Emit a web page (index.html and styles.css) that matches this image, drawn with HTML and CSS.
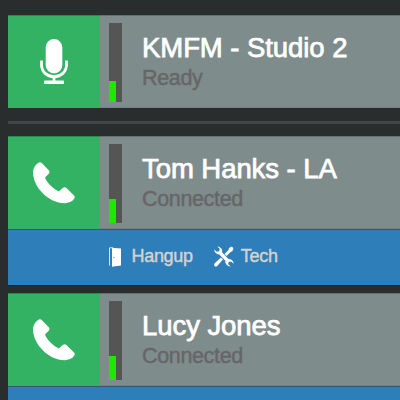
FILE: index.html
```html
<!DOCTYPE html>
<html lang="en">
<head>
<meta charset="utf-8">
<title>Connections</title>
<link rel="stylesheet" href="styles.css">
</head>
<body>
<svg class="defs" width="0" height="0">
  <symbol id="phone" viewBox="0 0 42 42">
    <path d="M0 10.500C0 6.500 2.500 2 6 .400C7.200 0 8 .200 9 1.200L15.800 8.200C16.700 9.200 16.600 10.600 15.800 11.700L12 15.500C13.800 20.800 20.300 27 25.800 29.400L30 25.700C31.300 24.900 32.500 25 33.400 25.900L41 33.500C42 34.700 41.900 35.500 41.300 36.600C39 40.200 35.300 41.300 31.500 41.200C15.500 40.900 .300 25.500 0 10.500Z"/>
  </symbol>
</svg>
<main class="list">
  <section class="card">
    <div class="row">
      <div class="status">
        <svg class="mic" width="28" height="45" viewBox="0 0 28 45"><rect x="5.700" y="0" width="16.600" height="34.500" rx="8.300"/><path class="line" d="M1.500 21.500V25.500C1.500 33 7 37.600 14 37.600S26.500 33 26.500 25.500V21.500M14 38V43"/><rect x="4" y="41.600" width="20" height="3.400" rx=".8"/></svg>
      </div>
      <div class="meter"><div class="level level-low"></div></div>
      <div class="info"><div class="name">KMFM - Studio 2</div><div class="state">Ready</div></div>
    </div>
  </section>
  <div class="divider"></div>
  <section class="card">
    <div class="row">
      <div class="status"><svg class="phone" width="42" height="42"><use href="#phone"/></svg></div>
      <div class="meter"><div class="level"></div></div>
      <div class="info"><div class="name">Tom Hanks - LA</div><div class="state">Connected</div></div>
    </div>
    <div class="actions">
      <div class="action hangup">
        <svg width="12" height="20" viewBox="0 0 12 20"><path d="M3 .700L12 1.500V18.400L3 19.800Z"/><path class="frame" d="M.500 18.500V.800H4"/><circle class="knob" cx="5" cy="10.300" r=".6"/></svg>
        <span>Hangup</span>
      </div>
      <div class="action tech">
        <svg width="20" height="21" viewBox="0 0 20 21"><path d="M3.200.400A5 5 0 0 1 8.200 6.500L14.500 13A5 5 0 0 1 19.700 17.700L17 15.500 14.600 16 14.200 18.200 16.700 20.400A5 5 0 0 1 11.300 14.700L5.300 8.500A5 5 0 0 1 .200 3.500L2.900 5.800 5.200 5.200 5.700 2.800Z"/><path d="M17.700.500L19.500 2.300 18.300 5.200 16.600 6 12.500 10.100 10.500 8.100 14.500 4 15 2.100ZM6.900 11.500L9 13.600 3.200 20Q1.800 21.200.600 19.900-.500 18.500.800 17.200Z"/></svg>
        <span>Tech</span>
      </div>
    </div>
  </section>
  <section class="card next">
    <div class="row">
      <div class="status"><svg class="phone" width="42" height="42"><use href="#phone"/></svg></div>
      <div class="meter"><div class="level"></div></div>
      <div class="info"><div class="name">Lucy Jones</div><div class="state">Connected</div></div>
    </div>
    <div class="actions last"></div>
  </section>
</main>
</body>
</html>
```
FILE: styles.css
```css
* { box-sizing: border-box; }
html, body { margin: 0; height: 400px; overflow: hidden; }
body {
  background: #2a2d2e;
  font-family: "Liberation Sans", Arial, sans-serif;
}
.defs { display: block; }
.list { padding: 15px 0 0 8px; height: 400px; overflow: hidden; }
.row {
  display: flex;
  height: 93px;
  background: #7f8c8c;
  border-top: 1px solid #66706f;
  border-bottom: 1px solid #748181;
}
.status {
  width: 92px;
  margin: -1px 0;
  display: flex;
  align-items: center;
  justify-content: center;
  background: #32b262;
  border-top: 1px solid #2a8950;
}
.status svg { fill: #fff; margin-bottom: 2px; }
.phone { margin-top: 1px; }
.mic .line { fill: none; stroke: #fff; stroke-width: 2.8; }
.meter {
  width: 13px;
  height: 79px;
  margin: 7px 0 0 9px;
  display: flex;
  align-items: flex-end;
  background: #555;
}
.level { width: 7px; height: 24px; background: #22e600; }
.level-low { height: 21px; }
.info { margin: 15px 0 0 20px; white-space: nowrap; }
.name {
  font-size: 27.500px;
  line-height: 34px;
  letter-spacing: -.06px;
  color: #fff;
  -webkit-text-stroke: .75px #fff;
}
.state {
  font-size: 21.500px;
  line-height: 26px;
  letter-spacing: -.35px;
  color: #666;
  -webkit-text-stroke: .45px #666;
}
.divider { height: 3px; margin: 13px 0 12px; background: #444546; }
.actions {
  height: 57px;
  display: flex;
  align-items: center;
  padding: 0 0 2px 101px;
  background: #2e7eb9;
  border-top: 1px solid #36566c;
  border-bottom: 1px solid #17222a;
}
.last { height: 14px; padding: 0; border-bottom: 0; }
.action {
  display: flex;
  align-items: center;
  font-size: 18px;
  letter-spacing: -.3px;
  color: #d2d2d2;
  -webkit-text-stroke: .45px #d2d2d2;
}
.action svg { fill: #fff; }
.hangup { gap: 10.500px; }
.tech { gap: 6.500px; margin-left: 21.500px; }
.frame { fill: none; stroke: #d8e9f4; stroke-width: 1; }
.knob { fill: #2e7eb9; }
.next { margin-top: 7px; }
```
